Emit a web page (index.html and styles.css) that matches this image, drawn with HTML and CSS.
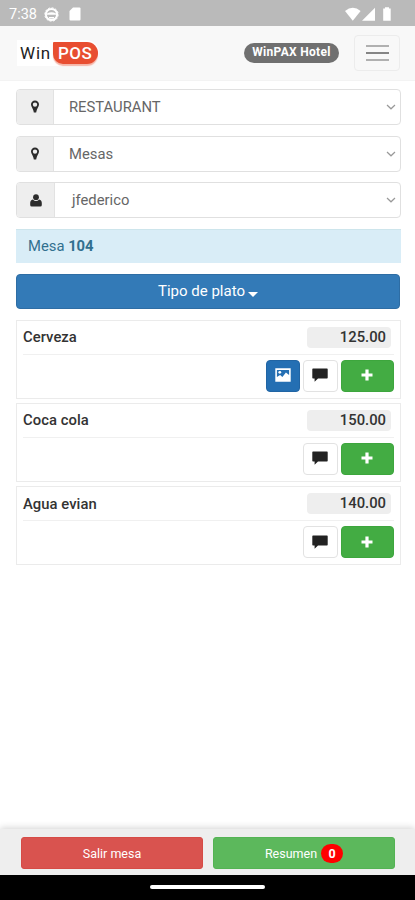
FILE: index.html
```html
<!DOCTYPE html>
<html lang="es">
<head>
<meta charset="utf-8">
<title>WinPOS</title>
<link rel="stylesheet" href="styles.css">
</head>
<body>
<svg width="0" height="0" class="defs">
  <symbol id="pin" viewBox="0 0 10 14"><path fill-rule="evenodd" d="M5 .5A4 4 0 0 0 1 4.600C1 6.700 3 8.500 3.500 11l.3 1.500h2.400L6.500 11C7 8.500 9 6.700 9 4.600A4 4 0 0 0 5 .5zM5 2.400a2.200 2.200 0 1 1 0 4.400a2.200 2.200 0 0 1 0-4.400z"/></symbol>
  <symbol id="chat" viewBox="0 0 16 14"><path d="M1 .5h14a.7.7 0 0 1 .7.7v8.600a.7.7 0 0 1-.7.7H6L2.600 13.700V10.500H1a.7.7 0 0 1-.7-.7V1.200A.7.7 0 0 1 1 .5z"/></symbol>
  <symbol id="plus" viewBox="0 0 12 12"><path d="M4.400 0.500h3.200v3.900h3.900v3.200H7.600v3.900H4.400V7.600H.5V4.400h3.900z"/></symbol>
  <symbol id="chev" viewBox="0 0 10 6"><path d="M1 1l4 3.800L9 1" fill="none" stroke="currentColor" stroke-width="1.200"/></symbol>
</svg>
<div class="status">
  <span class="time">7:38</span>
  <svg class="globe" width="15" height="15" viewBox="0 0 15 15"><circle cx="7.500" cy="7.500" r="5.600" fill="none" stroke="#fff" stroke-width="2"/><circle cx="7.500" cy="7.500" r="6.700" fill="none" stroke="#fff" stroke-width="1" stroke-dasharray="2 1.500"/><path d="M3 6.500q4.500-2.500 9 0v1.300H3zM5 10h5v1.500H5z" fill="#fff"/></svg>
  <svg class="sd" width="12" height="14" viewBox="0 0 12 14"><path d="M4 .5h6.500q1 0 1 1v11q0 1-1 1h-9q-1 0-1-1V4z" fill="#fff"/></svg>
  <svg class="signals" width="48" height="15" viewBox="0 0 48 15" fill="#fff"><path d="M0 4Q7.800-2.500 15.600 4L7.800 13.800z"/><path d="M30 .8v13H17z"/><path d="M40 1.500V.3h4v1.200h1.700v12.300h-7.500V1.500z"/></svg>
</div>
<header class="navbar">
  <div class="logo"><span class="win">Win</span><span class="pos">POS</span></div>
  <span class="hotel">WinPAX Hotel</span>
  <div class="toggle"><i></i><i></i><i></i></div>
</header>
<main>
  <div class="field"><span class="addon"><svg width="10" height="14"><use href="#pin"/></svg></span><span class="value">RESTAURANT</span><svg class="chev" width="10" height="6"><use href="#chev"/></svg></div>
  <div class="field"><span class="addon"><svg width="10" height="14"><use href="#pin"/></svg></span><span class="value">Mesas</span><svg class="chev" width="10" height="6"><use href="#chev"/></svg></div>
  <div class="field user"><span class="addon"><svg width="12" height="13" viewBox="0 0 12 13"><circle cx="6" cy="3.200" r="2.900"/><path d="M2.800 5.500Q6 8.500 9.200 5.500Q11.800 6 11.800 9v2q0 1.500-1.500 1.500H1.700Q.2 12.500.2 11V9Q.2 6 2.800 5.500z"/></svg></span><span class="value">jfederico</span><svg class="chev" width="10" height="6"><use href="#chev"/></svg></div>
  <div class="mesa">Mesa <b>104</b></div>
  <div class="tipo"><span>Tipo de plato</span><i class="caret"></i></div>

  <section class="card">
    <div class="head"><span class="name">Cerveza</span><span class="price">125.00</span></div>
    <div class="actions">
      <span class="btn image"><svg width="16" height="14" viewBox="0 0 16 14"><path fill="#fff" fill-rule="evenodd" d="M.3.3h15.400v13.400H.3zM1.900 1.900v7l3.200-2 2.300 2.200 3.500-4.600 3.200 2.400V1.900z"/><circle cx="4.800" cy="4.300" r="1.400" fill="#fff"/></svg></span>
      <span class="btn note"><svg width="16" height="14"><use href="#chat"/></svg></span>
      <span class="btn add"><svg width="12" height="12"><use href="#plus"/></svg></span>
    </div>
  </section>
  <section class="card">
    <div class="head"><span class="name">Coca cola</span><span class="price">150.00</span></div>
    <div class="actions">
      <span class="btn note"><svg width="16" height="14"><use href="#chat"/></svg></span>
      <span class="btn add"><svg width="12" height="12"><use href="#plus"/></svg></span>
    </div>
  </section>
  <section class="card">
    <div class="head"><span class="name">Agua evian</span><span class="price">140.00</span></div>
    <div class="actions">
      <span class="btn note"><svg width="16" height="14"><use href="#chat"/></svg></span>
      <span class="btn add"><svg width="12" height="12"><use href="#plus"/></svg></span>
    </div>
  </section>
</main>
<footer class="bottom">
  <span class="exit">Salir mesa</span>
  <span class="summary">Resumen <b class="count">0</b></span>
</footer>
<div class="system"><i></i></div>
</body>
</html>
```
FILE: styles.css
```css
* { box-sizing: border-box; }
body {
  margin: 0;
  height: 900px;
  display: flex;
  flex-direction: column;
  overflow: hidden;
  background: #fff;
  color: #333;
  font-family: Roboto, sans-serif;
  font-size: 15px;
}
svg { display: block; }
.defs { position: absolute; }

.status {
  height: 26px;
  flex: none;
  display: flex;
  align-items: center;
  padding: 2px 22px 0 9px;
  background: #bababa;
  color: #fff;
}
.time { width: 29px; font-size: 14.500px; }
.globe { margin-left: 6px; }
.sd { margin-left: 10px; }
.signals { margin-left: auto; }

.navbar {
  height: 55px;
  flex: none;
  display: flex;
  align-items: center;
  padding: 0 15px 0 17px;
  background: #f8f8f8;
  border-bottom: 1px solid #f3f3f3;
}
.logo {
  display: flex;
  align-items: center;
  width: 82px;
  height: 26px;
  padding-left: 3px;
  background: #fff;
  border-radius: 0 13px 13px 0;
  font-size: 17px;
}
.win { width: 33px; color: #222; letter-spacing: .8px; }
.pos {
  width: 45px;
  height: 22px;
  padding-left: 5px;
  line-height: 22px;
  background: #e84e31;
  color: #fff;
  border-radius: 1px 11px 11px 10px;
  box-shadow: 0 2px 1px #f5b5a8;
  font-weight: 500;
  letter-spacing: .5px;
}
.hotel {
  width: 95px;
  height: 20px;
  margin-left: auto;
  border-radius: 10px;
  background: #707070;
  color: #fff;
  text-align: center;
  font-size: 12px;
  font-weight: 700;
  line-height: 19px;
  letter-spacing: .3px;
}
.toggle {
  width: 46px;
  height: 36px;
  margin-left: 15px;
  display: flex;
  flex-direction: column;
  align-items: center;
  justify-content: center;
  gap: 5px;
  border: 1px solid #ececec;
  border-radius: 4px;
}
.toggle i { width: 23px; height: 2px; background: #b0b0b0; }
.toggle i:nth-child(2) { background: #858585; }

main { flex: 1; padding: 8px 14px 0 16px; }
.field {
  display: flex;
  align-items: center;
  height: 36px;
  margin-bottom: 10.500px;
  padding-right: 4px;
  border: 1px solid #e0e0e0;
  border-radius: 4px;
  color: #666;
}
.addon {
  width: 37px;
  height: 100%;
  display: flex;
  align-items: center;
  justify-content: center;
  background: #eee;
  border-right: 1px solid #e2e2e2;
  border-radius: 3px 0 0 3px;
}
.addon svg { fill: #2c2c2c; }
.user .addon { width: 38px; }
.value { flex: 1; padding-left: 15px; font-size: 14.800px; }
.user .value { padding-left: 17px; }
.chev { color: #999; }
.mesa {
  height: 34px;
  padding-left: 12px;
  line-height: 33px;
  font-size: 14.800px;
  background: #d9edf7;
  border-top: 1px solid #cde5ec;
  color: #31708f;
}
.tipo {
  display: flex;
  align-items: center;
  justify-content: center;
  gap: 3px;
  height: 35px;
  margin: 11px 1px 11px 0;
  border-radius: 4px;
  background: #337ab7;
  border: 1px solid #2e6da4;
  color: #fff;
}
.caret {
  margin-top: 6px;
  border: 5px solid transparent;
  border-top: 5px solid #fff;
  border-bottom: 0;
}

.card {
  height: 79px;
  margin-bottom: 4.300px;
  padding: 0 6px;
  border: 1px solid #ebebeb;
}
.head {
  height: 34px;
  display: flex;
  align-items: center;
  justify-content: space-between;
  border-bottom: 1px solid #f0f0f0;
}
.name { font-weight: 500; font-size: 14.800px; letter-spacing: .05px; }
.price {
  width: 84px;
  height: 21px;
  margin-right: 3px;
  padding-right: 5px;
  border-radius: 4px;
  background: #eee;
  text-align: right;
  line-height: 21px;
  font-weight: 500;
  font-size: 14.800px;
}
.actions { display: flex; justify-content: flex-end; gap: 3px; padding-top: 5px; }
.btn {
  display: flex;
  align-items: center;
  justify-content: center;
  width: 34px;
  height: 32px;
  border-radius: 4px;
}
.image { background: #246fb3; border: 1px solid #2165a4; }
.note { width: 35px; border: 1px solid #e2e2e2; fill: #222; }
.add { width: 53px; background: #43ac43; border: 1px solid #3da63d; fill: #fff; }
.btn svg { margin-top: -1px; }
.note svg { margin-left: -1px; }
.add svg { margin-left: -1px; }

.bottom {
  height: 46px;
  flex: none;
  display: flex;
  gap: 10px;
  padding: 8px 20px 6px 21px;
  background: #eee;
  box-shadow: 0 -1px 7px rgba(0, 0, 0, .18);
  color: #fff;
  font-size: 12.500px;
}
.exit, .summary {
  flex: 1;
  display: flex;
  align-items: center;
  justify-content: center;
  border-radius: 3px;
}
.exit { background: #d9534f; border: 1px solid #d64b46; }
.summary { background: #5cb85c; border: 1px solid #54b354; }
.count {
  width: 22px;
  height: 19px;
  margin-left: 4px;
  border-radius: 10px;
  background: #f00;
  text-align: center;
  line-height: 19px;
}
.system { height: 25px; flex: none; background: #000; }
.system i {
  display: block;
  width: 115px;
  height: 4px;
  margin: 10px auto 0;
  border-radius: 2px;
  background: #fff;
}
```
